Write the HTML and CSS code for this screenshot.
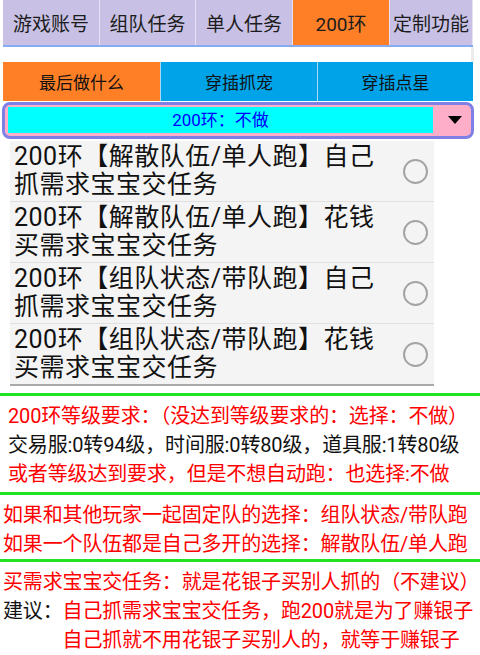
FILE: index.html
```html
<!DOCTYPE html>
<html lang="zh-CN">
<head>
<meta charset="utf-8">
<title>200环</title>
<link rel="stylesheet" href="styles.css">
</head>
<body>
<div class="page">
  <div class="tabbar">
    <div class="tab">游戏账号</div>
    <div class="tab">组队任务</div>
    <div class="tab">单人任务</div>
    <div class="tab active">200环</div>
    <div class="tab last">定制功能</div>
  </div>
  <div class="gap"></div>
  <div class="subtabs">
    <div class="subtab active">最后做什么</div>
    <div class="subtab">穿插抓宠</div>
    <div class="subtab">穿插点星</div>
  </div>
  <div class="spinner">
    <div class="spinner-value">200环：不做</div>
    <div class="spinner-arrow"><span class="triangle"></span></div>
  </div>
  <div class="list">
    <div class="row">
      <div class="row-text">200环【解散队伍/单人跑】自己抓需求宝宝交任务</div>
      <span class="radio"></span>
    </div>
    <div class="row">
      <div class="row-text">200环【解散队伍/单人跑】花钱买需求宝宝交任务</div>
      <span class="radio"></span>
    </div>
    <div class="row">
      <div class="row-text">200环【组队状态/带队跑】自己抓需求宝宝交任务</div>
      <span class="radio"></span>
    </div>
    <div class="row">
      <div class="row-text">200环【组队状态/带队跑】花钱买需求宝宝交任务</div>
      <span class="radio"></span>
    </div>
  </div>
  <div class="divider first"></div>
  <div class="note note-1">
    <div class="line red">200环等级要求：（没达到等级要求的：选择：不做）</div>
    <div class="line black">交易服:0转94级，时间服:0转80级，道具服:1转80级</div>
    <div class="line red">或者等级达到要求，但是不想自动跑：也选择:不做</div>
  </div>
  <div class="divider"></div>
  <div class="note note-2">
    <div class="line red">如果和其他玩家一起固定队的选择：组队状态/带队跑</div>
    <div class="line red">如果一个队伍都是自己多开的选择：解散队伍/单人跑</div>
  </div>
  <div class="divider"></div>
  <div class="note note-3">
    <div class="line red">买需求宝宝交任务：就是花银子买别人抓的（不建议）</div>
    <div class="advice">
      <div class="line black">建议：</div>
      <div class="advice-lines">
        <div class="line red">自己抓需求宝宝交任务，跑200就是为了赚银子</div>
        <div class="line red">自己抓就不用花银子买别人的，就等于赚银子</div>
      </div>
    </div>
  </div>
</div>
</body>
</html>
```
FILE: styles.css
```css
html, body {
  margin: 0;
  padding: 0;
  overflow: hidden;
  background: #ffffff;
}
body {
  width: 480px;
  height: 655px;
  font-family: Roboto, "Noto Sans CJK SC", sans-serif;
  color: #111111;
}
.page {
  width: 480px;
}
.tabbar {
  margin-left: 3px;
  width: 470px;
  height: 45px;
  display: flex;
  gap: 1px;
  background: #e6e2f3;
  border-bottom: 2px solid #86abf0;
}
.tab {
  width: 96px;
  flex: none;
  background: #c8c1e5;
  display: flex;
  align-items: center;
  justify-content: center;
  font-size: 19px;
  color: #1c1c1c;
  white-space: nowrap;
}
.tab:nth-child(2) { width: 95px; }
.tab.last { width: 82px; }
.tab.active { background: #ff7f27; }
.gap {
  height: 15px;
  width: 468px;
  margin-left: 3px;
  border-right: 3px solid #ececec;
}
.subtabs {
  margin-left: 3px;
  width: 470px;
  height: 39px;
  display: flex;
  gap: 1px;
  background: #a9d9f3;
}
.subtab {
  flex: none;
  width: 156px;
  background: #00a2e8;
  display: flex;
  align-items: center;
  justify-content: center;
  font-size: 17px;
  color: #111111;
}
.subtab:first-child { width: 157px; }
.subtab:last-child { width: 155px; }
.subtab.active { background: #ff7f27; }
.spinner {
  margin: 1px 0 0 2px;
  width: 463px;
  height: 26px;
  padding: 2px 0 3px 3px;
  border: 3px solid #7f80e6;
  border-radius: 8px;
  background: #ffaec9;
  display: flex;
}
.spinner-value {
  width: 425px;
  flex: none;
  background: #00ffff;
  color: #0000ff;
  font-size: 17px;
  line-height: 26px;
  text-align: center;
}
.spinner-arrow {
  flex: 1;
  display: flex;
  align-items: center;
  justify-content: center;
  padding-left: 6px;
}
.triangle {
  width: 0;
  height: 0;
  border-left: 7px solid transparent;
  border-right: 7px solid transparent;
  border-top: 8px solid #000000;
}
.list {
  margin: 2px 0 0 10px;
  width: 424px;
}
.row {
  height: 60px;
  background: #f4f4f4;
  border-bottom: 1px solid #e0e0e0;
  display: flex;
  align-items: center;
}
.row:last-child {
  border-bottom: 2px solid #a9a9a9;
}
.row-text {
  width: 371px;
  padding: 0 14px 0 4px;
  font-size: 25px;
  line-height: 28px;
  letter-spacing: 0.5px;
  color: #111111;
}
.radio {
  margin-left: 4px;
  width: 21px;
  height: 21px;
  border: 2px solid #a4a4a4;
  border-radius: 50%;
  flex: none;
}
.divider {
  height: 3px;
  background: #22e322;
}
.divider.first {
  margin-top: 7px;
}
.note {
  font-size: 20px;
}
.line {
  line-height: 29px;
  white-space: nowrap;
  letter-spacing: -0.15px;
}
.red { color: #ff0000; }
.black { color: #111111; }
.note-1 {
  padding: 6px 0 3px 8px;
}
.note-2 {
  padding: 6px 0 0 3px;
}
.note-3 {
  padding: 6px 0 0 3px;
}
.advice {
  display: flex;
}
```
